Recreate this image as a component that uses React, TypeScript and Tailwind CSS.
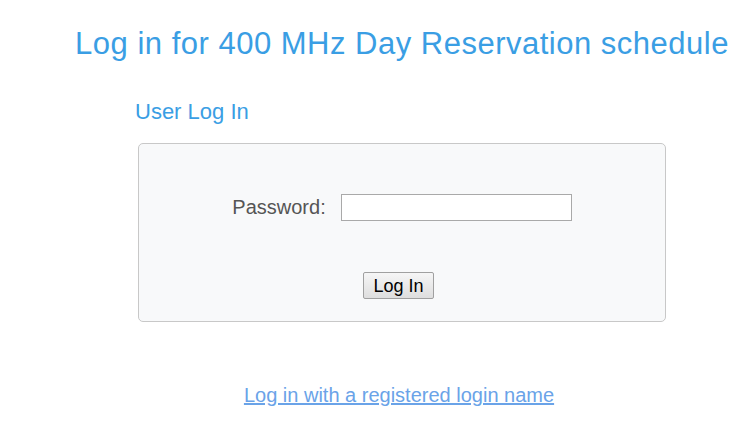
export default function App() {
  return (
    <div
      className="min-h-[422px] w-[750px] bg-white"
      style={{ fontFamily: '"Liberation Sans", Arial, sans-serif' }}
    >
      <div className="ml-[138px] w-[528px] pt-[26px]">
        <div className="flex justify-center">
          <h1 className="whitespace-nowrap text-[31px] leading-[35px] tracking-[0.5px] text-[#3a9ee4]">
            Log in for 400 MHz Day Reservation schedule
          </h1>
        </div>
        <h2 className="-ml-[3px] mt-[38px] text-[22px] leading-[26px] text-[#3a9ee4]">
          User Log In
        </h2>
        <form className="mt-[18px] flex h-[179px] flex-col items-center rounded-[5px] border border-[#c8c8c8] bg-[#f8f9fa]">
          <div className="mt-[50px] flex h-[27px] items-center gap-[15px]">
            <label className="text-[20px] leading-[23px] text-[#555555]">Password:</label>
            <input
              type="password"
              className="h-[27px] w-[231px] border border-[#a9a9a9] bg-white"
            />
          </div>
          <button
            type="button"
            className="mr-[7px] mt-[51px] h-[27px] w-[71px] rounded-[2px] border border-[#a0a0a0] bg-gradient-to-b from-[#f6f6f6] to-[#dedede] text-[18px] leading-[20px] text-black"
          >
            Log In
          </button>
        </form>
        <div className="mt-[61px] flex justify-center pr-[6px]">
          <a href="#" className="text-[20px] leading-[24px] text-[#6aa3e8] underline">
            Log in with a registered login name
          </a>
        </div>
      </div>
    </div>
  );
}
